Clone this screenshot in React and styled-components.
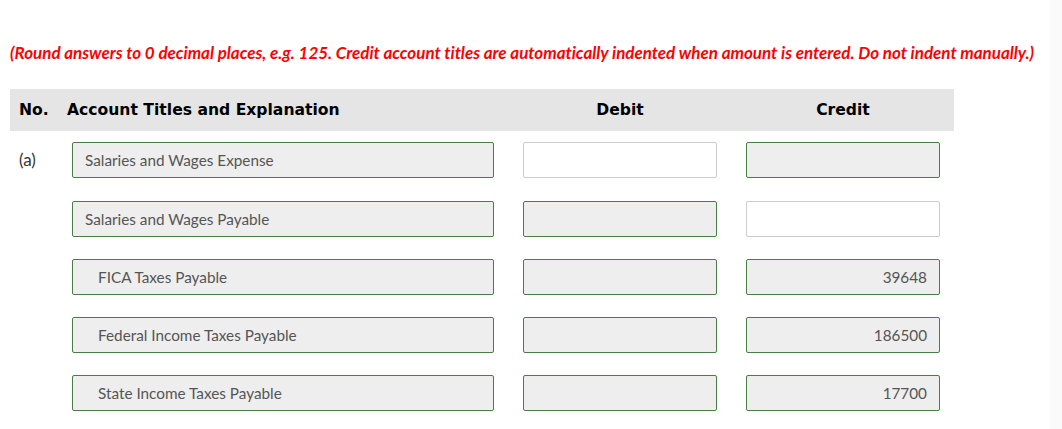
import React from "react";
import styled, { createGlobalStyle } from "styled-components";

const Global = createGlobalStyle`
  html, body { margin: 0; padding: 0; background: #fff; }
  body { font-family: Lato, "Open Sans", sans-serif; }
`;

const Page = styled.div`
  display: flex;
  width: 1062px;
  height: 429px;
  overflow: hidden;
`;

const Main = styled.div`
  width: 1050px;
  padding: 42px 0 0 10px;
  box-sizing: border-box;
`;

const Side = styled.div`
  flex: 1;
  background: #fafafa;
`;

const Note = styled.p`
  margin: 0;
  color: #ff0000;
  font-style: italic;
  font-weight: bold;
  font-size: 17px;
  line-height: 21px;
  letter-spacing: -0.02px;
  white-space: nowrap;
`;

const Table = styled.div`
  width: 944px;
  margin-top: 26px;
`;

const Grid = styled.div`
  display: grid;
  grid-template-columns: ${(p) => p.$cols};
  column-gap: 29px;
  align-items: center;
`;

const HeadRow = styled(Grid)`
  height: 42px;
  background: #e5e5e5;
  margin-bottom: 11px;
  font-family: "DejaVu Sans", Verdana, sans-serif;
  font-weight: bold;
  font-size: 15.6px;
  color: #000;
`;

const HeadCell = styled.div`
  padding-left: ${(p) => p.$pl || 0}px;
  text-align: ${(p) => p.$align || "left"};
  white-space: nowrap;
`;

const Row = styled(Grid)`
  height: 36px;
  margin-bottom: ${(p) => (p.$first ? 23 : 22)}px;
`;

const Label = styled.div`
  padding-left: 9px;
  font-size: 17px;
  line-height: 20px;
  color: #333;
  align-self: start;
  padding-top: 8px;
`;

const Field = styled.div`
  height: 36px;
  box-sizing: border-box;
  border: 1px solid ${(p) => (p.$empty ? "#cccccc" : "#4a7d45")};
  border-radius: 2px;
  background: ${(p) => (p.$empty ? "#ffffff" : "#eeeeee")};
  display: flex;
  align-items: center;
  justify-content: ${(p) => (p.$right ? "flex-end" : "flex-start")};
  padding: 0 12px 0 ${(p) => (p.$indent ? 25 : 12)}px;
  font-size: 15.3px;
  color: #555;
  white-space: nowrap;
`;

const rows = [
  { no: "(a)", title: "Salaries and Wages Expense", indent: false, debit: { empty: true }, credit: { empty: false, v: "" } },
  { no: "", title: "Salaries and Wages Payable", indent: false, debit: { empty: false }, credit: { empty: true, v: "" } },
  { no: "", title: "FICA Taxes Payable", indent: true, debit: { empty: false }, credit: { empty: false, v: "39648" } },
  { no: "", title: "Federal Income Taxes Payable", indent: true, debit: { empty: false }, credit: { empty: false, v: "186500" } },
  { no: "", title: "State Income Taxes Payable", indent: true, debit: { empty: false }, credit: { empty: false, v: "17700" } },
];

const COLS = "33px 422px 194px 194px";

export default function App() {
  return (
    <Page>
      <Global />
      <Main>
        <Note>
          (Round answers to 0 decimal places, e.g. 125. Credit account titles are automatically indented when amount is entered. Do not indent manually.)
        </Note>
        <Table>
          <HeadRow $cols="28px 427px 194px 194px">
            <HeadCell $pl={9}>No.</HeadCell>
            <HeadCell>Account Titles and Explanation</HeadCell>
            <HeadCell $align="center">Debit</HeadCell>
            <HeadCell $align="center">Credit</HeadCell>
          </HeadRow>
          {rows.map((r, i) => (
            <Row key={i} $cols={COLS} $first={i === 0}>
              <Label>{r.no}</Label>
              <Field $indent={r.indent}>{r.title}</Field>
              <Field $empty={r.debit.empty} />
              <Field $empty={r.credit.empty} $right>{r.credit.v}</Field>
            </Row>
          ))}
        </Table>
      </Main>
      <Side />
    </Page>
  );
}
